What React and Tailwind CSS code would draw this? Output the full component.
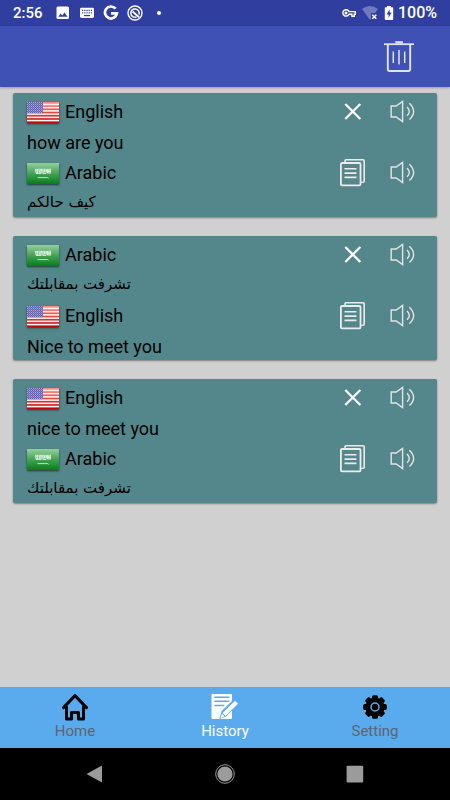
const history = [
  {
    id: 1,
    from: { lang: 'English', text: 'how are you' },
    to: { lang: 'Arabic', text: 'كيف حالكم' },
  },
  {
    id: 2,
    from: { lang: 'Arabic', text: 'تشرفت بمقابلتك' },
    to: { lang: 'English', text: 'Nice to meet you' },
  },
  {
    id: 3,
    from: { lang: 'English', text: 'nice to meet you' },
    to: { lang: 'Arabic', text: 'تشرفت بمقابلتك' },
  },
]

function UsFlag() {
  return (
    <svg viewBox="0 0 32 21" className="w-8 h-[21px] shadow-[0_1px_2px_rgba(0,0,0,0.6)]" aria-hidden="true">
      <defs>
        <linearGradient id="usStripe" x1="0" y1="0" x2="0" y2="21" gradientUnits="userSpaceOnUse">
          <stop offset="0" stopColor="#ff8a80" />
          <stop offset="0.5" stopColor="#f0403c" />
          <stop offset="1" stopColor="#b80808" />
        </linearGradient>
        <pattern id="usStars" width="2" height="2" patternUnits="userSpaceOnUse">
          <rect width="2" height="2" fill="#625fb4" />
          <rect width="1" height="1" fill="#aaa8de" />
          <rect x="1" y="1" width="1" height="1" fill="#8684c8" />
        </pattern>
      </defs>
      <rect width="32" height="21" fill="#fbf1f0" />
      {[0, 1, 2, 3, 4, 5, 6].map((i) => (
        <rect key={i} y={i * 3.23} width="32" height="1.62" fill="url(#usStripe)" />
      ))}
      <rect width="16" height="11.3" fill="url(#usStars)" />
    </svg>
  )
}

function SaFlag() {
  return (
    <svg viewBox="0 0 32 21" className="w-8 h-[21px] shadow-[0_1px_2px_rgba(0,0,0,0.6)]" aria-hidden="true">
      <defs>
        <linearGradient id="saGreen" x1="0" y1="0" x2="0" y2="1">
          <stop offset="0" stopColor="#93cf9e" />
          <stop offset="0.5" stopColor="#45a254" />
          <stop offset="1" stopColor="#087d1c" />
        </linearGradient>
      </defs>
      <rect width="32" height="21" fill="url(#saGreen)" />
      <rect x="8.5" y="5.6" width="15.5" height="5.2" fill="#d5efd8" opacity="0.45" />
      <g stroke="#e3f4e5" fill="none" strokeWidth="0.8">
        <path d="M8.5 6v2.5q0 2 2 1.5V6M9 10.5h5M12 6l1 4M14 5.8v4.4M13 7h3M16 6v4.5h3M17.5 6v3M19 6l1.5 4V6M22 6v4.5M20.5 8.5h3M23.5 5.8v4.4M9 7h2M17 8h5" />
        <path d="M10.5 14.6h10l1.2.7" />
      </g>
    </svg>
  )
}

function SpeakerIcon() {
  return (
    <svg viewBox="0 0 26 24" className="w-[26px] h-6" fill="none" stroke="#e4e4e4" strokeWidth="1.4" aria-hidden="true">
      <path d="M1.2 6h5L12.6 1.4v20.2L6.2 17h-5z" />
      <path d="M17 7q4.6 4.4 0 8.8" />
      <path d="M19.4 3.2q8.4 8.2 0 16.4" />
    </svg>
  )
}

function CopyIcon() {
  return (
    <svg viewBox="0 0 26 28" className="w-[26px] h-7" fill="none" stroke="#ececec" aria-hidden="true">
      <rect x="0.9" y="4" width="19.6" height="22.4" rx="1.2" strokeWidth="1.8" />
      <path d="M5 3.4V1.8q0-1 1-1h17q1.2 0 1.2 1.2v20q0 1.3-1.2 1.3H21.3" strokeWidth="1.6" />
      <path d="M4.5 9.7h12M4.5 14.1h12M4.5 18.4h12" strokeWidth="1.6" />
    </svg>
  )
}

function CloseIcon() {
  return (
    <svg viewBox="0 0 26 26" className="w-[26px] h-[26px]" fill="none" stroke="#fff" strokeWidth="2.3" aria-hidden="true">
      <path d="M5.3 5l15 15M20.3 5l-15 15" />
    </svg>
  )
}

function TrashIcon() {
  return (
    <svg viewBox="0 0 30 32" className="w-[30px] h-8" fill="none" stroke="#e2e2e6" aria-hidden="true">
      <path d="M0 3.2h30" strokeWidth="1.8" />
      <path d="M11.3 1.4h7.6" strokeWidth="2.4" />
      <path d="M3.8 3.5v24.5q0 2 2 2h18.4q2 0 2-2V3.5" strokeWidth="1.9" />
      <path d="M9.3 10.5v11.5M15 9v14.5M20.7 10.5v11.5" strokeWidth="1.5" />
    </svg>
  )
}

function StatusBar() {
  return (
    <div className="h-[26px] bg-[#303f9f] px-[13px] flex items-center justify-between text-white font-medium">
      <div className="flex items-center">
        <span className="w-[31px] text-[15px]">2:56</span>
        <svg viewBox="0 0 14 14" className="w-[14px] h-[14px] ml-3" aria-hidden="true">
          <rect x="0.5" y="0.5" width="12.5" height="12.5" rx="1.5" fill="#fff" />
          <path d="M2.3 10.7l2.4-3.3 1.6 2 2.2-3 3 4.3z" fill="#303f9f" />
        </svg>
        <svg viewBox="0 0 14 12" className="w-[14px] h-3 ml-[10px]" aria-hidden="true">
          <rect y="0.8" width="14" height="10.2" rx="1.4" fill="#fff" />
          <path d="M2 3.4h10M2 5.9h10" stroke="#303f9f" strokeWidth="1.2" strokeDasharray="1.2 1" />
          <path d="M4 8.6h6" stroke="#303f9f" strokeWidth="1.2" />
        </svg>
        <svg viewBox="0 0 16 16" className="w-4 h-4 ml-[9px]" fill="none" stroke="#fff" strokeWidth="2.7" aria-hidden="true">
          <path d="M12.6 3.7A6 6 0 1 0 13.9 8.3H8" />
        </svg>
        <svg viewBox="0 0 16 16" className="w-4 h-4 ml-2" fill="none" stroke="#fff" aria-hidden="true">
          <circle cx="8" cy="8" r="7" strokeWidth="1.4" />
          <path d="M9.5 12a4.2 4.2 0 1 1 2.4-2.4" strokeWidth="1.5" />
          <path d="M5.6 6.6l6.4 5.6" strokeWidth="2" />
        </svg>
        <span className="w-1 h-1 rounded-full bg-white ml-[14px]" />
      </div>
      <div className="flex items-center">
        <svg viewBox="0 0 14 10" className="w-[14px] h-[10px]" fill="none" stroke="#fff" strokeWidth="1.4" aria-hidden="true">
          <path d="M7 3.6h6.3v2.6h-1v2.1H9.9V6.2H7a3.2 3.2 0 1 1 0-2.6z" />
          <circle cx="4" cy="4.9" r="0.8" fill="#fff" />
        </svg>
        <svg viewBox="0 0 16 14" className="w-4 h-[14px] ml-[6px]" aria-hidden="true">
          <path d="M0 3q8-6 16 0l-3 4H9v6l-1 1z" fill="#7079bd" />
          <path d="M10.3 8.7l4 4M14.3 8.7l-4 4" stroke="#fff" strokeWidth="1.5" />
        </svg>
        <svg viewBox="0 0 10 14" className="w-[10px] h-[14px] ml-[6px]" aria-hidden="true">
          <path d="M3 0h4v1.3h1.3q.9 0 .9.9v10.9q0 .9-.9.9H1.7q-.9 0-.9-.9V2.2q0-.9.9-.9H3z" fill="#fff" />
          <path d="M5.6 3.3L2.6 8.4h2v3.3l3-5.1h-2z" fill="#303f9f" />
        </svg>
        <span className="ml-1 text-base">100%</span>
      </div>
    </div>
  )
}

function Entry({ lang, text, action }) {
  const arabic = lang === 'Arabic'
  return (
    <>
      <div className="h-[34px] flex items-center">
        {arabic ? <SaFlag /> : <UsFlag />}
        <span className="ml-[6px] flex-1">{lang}</span>
        {action}
        <button type="button" aria-label={'Speak ' + lang} className="ml-6">
          <SpeakerIcon />
        </button>
      </div>
      {arabic ? (
        <p lang="ar" dir="rtl" className="h-[27px] leading-6 text-left text-[15px] font-['DejaVu_Sans',sans-serif]">
          {text}
        </p>
      ) : (
        <p className="h-[27px] leading-[27px]">{text}</p>
      )}
    </>
  )
}

function HistoryCard({ from, to }) {
  return (
    <li className="bg-[#54878b] rounded-xs shadow-[0_1px_2px_rgba(0,0,0,0.4)] pt-[2px] pl-[14px] pr-[21px] text-lg">
      <Entry
        {...from}
        action={
          <button type="button" aria-label="Remove">
            <CloseIcon />
          </button>
        }
      />
      <Entry
        {...to}
        action={
          <button type="button" aria-label="Copy">
            <CopyIcon />
          </button>
        }
      />
    </li>
  )
}

function HomeIcon() {
  return (
    <svg viewBox="0 0 28 28" className="w-7 h-7" fill="none" stroke="#000" strokeWidth="3" strokeLinejoin="round" strokeLinecap="round" aria-hidden="true">
      <path d="M2.5 14.6L14 2.6l11.5 12" />
      <path d="M5.5 14v12h5v-6.5h7V26h5V14" />
    </svg>
  )
}

function NoteIcon() {
  return (
    <svg viewBox="0 0 28 28" className="w-7 h-7" aria-hidden="true">
      <rect x="0.5" y="1" width="20.5" height="25" rx="1" fill="#fff" />
      <path d="M3.3 4.2h15M3.3 8.2h15M3.3 12.4h10" stroke="#5babec" strokeWidth="1.5" />
      <path d="M8.3 26l2.4-8L22.5 6.4l5.3 4.4-12.6 12.6z" fill="#5babec" />
      <path d="M24 7.7l3 3-12.4 12.2-3-3z" fill="#fff" />
      <path d="M10.9 20.7l2.7 2.7-4 1.6z" fill="#fff" />
    </svg>
  )
}

function GearIcon() {
  return (
    <svg viewBox="0 0 28 28" className="w-7 h-7" aria-hidden="true">
      <circle cx="14" cy="14" r="9.6" fill="#000" />
      {[0, 45, 90, 135].map((a) => (
        <rect key={a} x="11" y="2.2" width="6" height="23.6" rx="1.6" fill="#000" transform={`rotate(${a} 14 14)`} />
      ))}
      <circle cx="14" cy="14" r="4" fill="none" stroke="#5babec" strokeWidth="1.5" />
    </svg>
  )
}

const tabs = [
  { label: 'Home', Icon: HomeIcon },
  { label: 'History', Icon: NoteIcon, active: true },
  { label: 'Setting', Icon: GearIcon },
]

export default function App() {
  return (
    <div className="min-h-screen flex flex-col bg-[#d0d0d0] text-black font-[Roboto,sans-serif]">
      <StatusBar />
      <header className="h-[61px] bg-[#3f51b5] flex items-center justify-end pr-9 shadow-[0_1px_2px_rgba(0,0,0,0.25)]">
        <button type="button" aria-label="Clear history">
          <TrashIcon />
        </button>
      </header>

      <main className="flex-1 px-[13px] pt-[6px] pb-5">
        <ul className="flex flex-col gap-[19px]">
          {history.map((item) => (
            <HistoryCard key={item.id} from={item.from} to={item.to} />
          ))}
        </ul>
      </main>

      <nav className="h-[61px] bg-[#5aabee] grid grid-cols-3">
        {tabs.map(({ label, Icon, active }) => (
          <button
            key={label}
            type="button"
            aria-current={active ? 'page' : undefined}
            className={
              'flex flex-col items-center pt-[6px] text-[15px] leading-5 ' + (active ? 'text-white' : 'text-[#5f6470]')
            }
          >
            <Icon />
            {label}
          </button>
        ))}
      </nav>

      <div className="h-[52px] bg-black flex items-center justify-center gap-[110px]">
        <button type="button" aria-label="Back">
          <svg viewBox="0 0 20 20" className="w-5 h-5" aria-hidden="true">
            <path d="M1.5 10L17 1.4v17.2z" fill="#9b9b9b" />
          </svg>
        </button>
        <button type="button" aria-label="Home screen">
          <svg viewBox="0 0 20 20" className="w-5 h-5" aria-hidden="true">
            <circle cx="10" cy="10" r="9.3" fill="none" stroke="#9b9b9b" strokeWidth="1" />
            <circle cx="10" cy="10" r="7.6" fill="#9b9b9b" />
          </svg>
        </button>
        <button type="button" aria-label="Recent apps">
          <svg viewBox="0 0 20 20" className="w-5 h-5" aria-hidden="true">
            <rect x="1.6" y="1.8" width="16.6" height="16.6" rx="0.8" fill="#9b9b9b" />
          </svg>
        </button>
      </div>
    </div>
  )
}
